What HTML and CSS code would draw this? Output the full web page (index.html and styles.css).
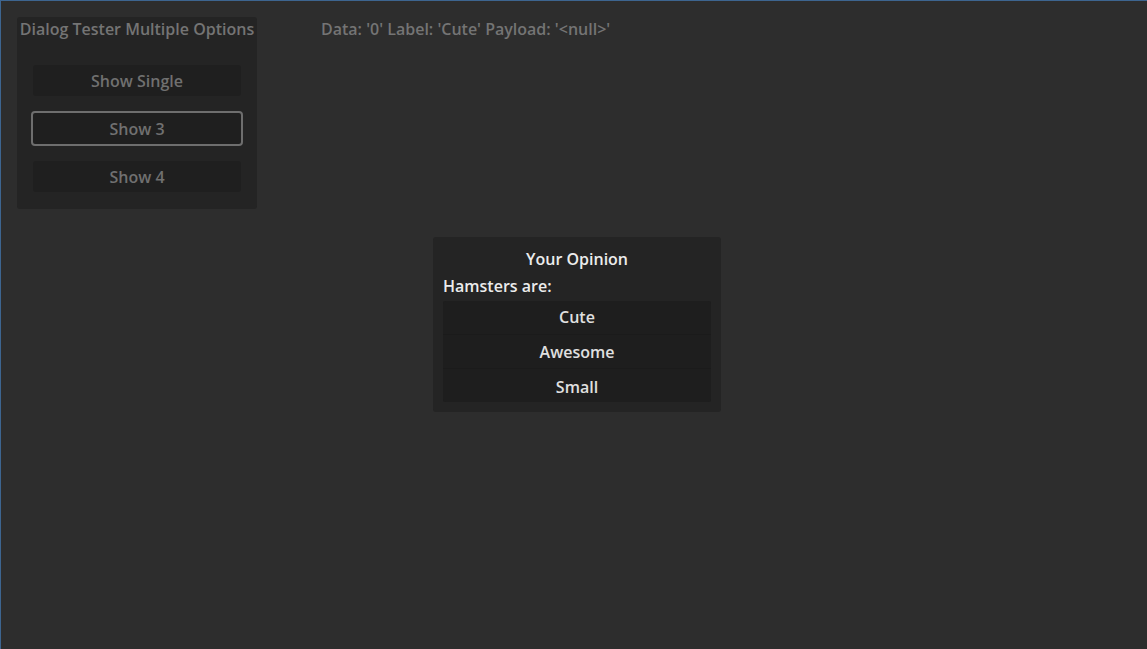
FILE: index.html
```html
<!DOCTYPE html>
<html>
<head>
<meta charset="utf-8">
<link rel="stylesheet" href="styles.css">
</head>
<body>
<div class="window">
  <div class="top">
    <div class="panel">
      <div class="panel-title">Dialog Tester Multiple Options</div>
      <div class="panel-buttons">
        <div class="btn">Show Single</div>
        <div class="btn focused">Show 3</div>
        <div class="btn">Show 4</div>
      </div>
    </div>
    <div class="status">Data: '0' Label: 'Cute' Payload: '&lt;null&gt;'</div>
  </div>
  <div class="dialog-row">
    <div class="dialog">
      <div class="dialog-title">Your Opinion</div>
      <div class="dialog-msg">Hamsters are:</div>
      <div class="options">
        <div class="opt">Cute</div>
        <div class="opt">Awesome</div>
        <div class="opt">Small</div>
      </div>
    </div>
  </div>
</div>
</body>
</html>
```
FILE: styles.css
```css
html, body {
  margin: 0;
  padding: 0;
  width: 1147px;
  height: 649px;
  overflow: hidden;
  background: #2d2d2d;
}
body {
  font-family: "Open Sans", "Noto Sans", sans-serif;
  font-size: 16px;
  font-weight: 600;
}
.window {
  box-sizing: border-box;
  width: 1147px;
  height: 649px;
  border-top: 1px solid #3d6590;
  border-left: 1px solid #3d6590;
  background: #2d2d2d;
}
.top {
  display: flex;
  align-items: flex-start;
  padding: 16px 0 0 16px;
}
.panel {
  width: 240px;
  height: 192px;
  box-sizing: border-box;
  background: #242424;
  border-radius: 3px;
  display: flex;
  flex-direction: column;
  align-items: center;
}
.panel-title {
  color: #747474;
  line-height: 22px;
  margin-top: 1px;
  white-space: nowrap;
}
.panel-buttons {
  margin-top: 25px;
  display: flex;
  flex-direction: column;
  gap: 17px;
  align-items: center;
}
.btn {
  width: 208px;
  height: 31px;
  box-sizing: border-box;
  background: #1f1f1f;
  color: #707070;
  border-radius: 3px;
  display: flex;
  align-items: center;
  justify-content: center;
}
.btn.focused {
  width: 212px;
  height: 35px;
  margin: -2px 0;
  border: 2px solid #6e6e6e;
  border-radius: 4px;
}
.status {
  margin-left: 64px;
  margin-top: 1px;
  line-height: 22px;
  color: #747474;
  white-space: nowrap;
}
.dialog-row {
  display: flex;
  padding-left: 432px;
  margin-top: 28px;
}
.dialog {
  width: 288px;
  height: 175px;
  box-sizing: border-box;
  background: #242424;
  border-radius: 3px;
  padding: 11px 10px 10px 10px;
  display: flex;
  flex-direction: column;
}
.dialog-title {
  color: #ececec;
  text-align: center;
  line-height: 22px;
}
.dialog-msg {
  color: #ececec;
  line-height: 22px;
  margin-top: 5px;
}
.options {
  margin-top: 4px;
  background: #1b1b1b;
  border-radius: 3px;
  display: flex;
  flex-direction: column;
  gap: 1px;
  overflow: hidden;
}
.opt {
  height: 33px;
  box-sizing: border-box;
  display: flex;
  align-items: center;
  justify-content: center;
  color: #e0e0e0;
  background: #1e1e1e;
}
.opt:first-child {
  padding-bottom: 2px;
}
.opt:last-child {
  padding-top: 2px;
}
```
